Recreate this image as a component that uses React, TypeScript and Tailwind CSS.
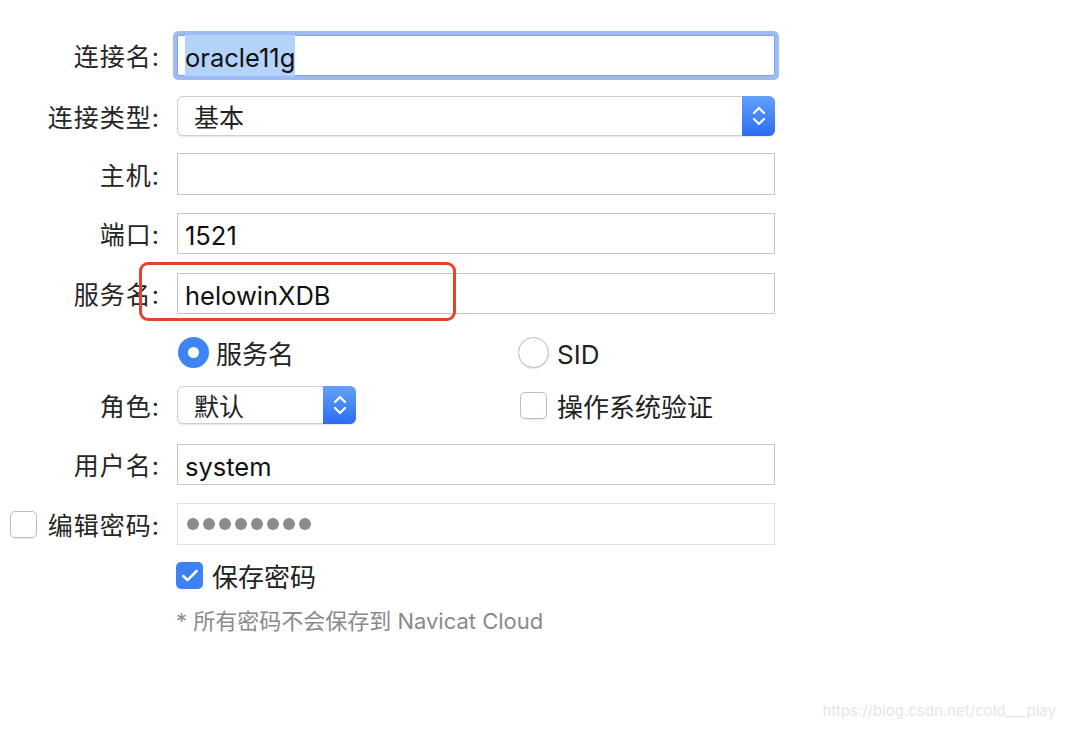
import { Check } from "lucide-react";

const font = { fontFamily: 'Inter, "Noto Sans CJK SC", sans-serif' };

// blue up/down arrows on the right of a popup button
const Stepper = () => (
  <div className="w-[33px] self-stretch -my-px -mr-px rounded-r-[6px] bg-gradient-to-b from-[#63a1fa] to-[#2a6cf1] flex items-center justify-center">
    <svg width="14" height="22" viewBox="0 0 14 22" fill="none" stroke="white" strokeWidth="2.2" strokeLinecap="round" strokeLinejoin="round">
      <path d="M2 8 L7 3 L12 8" />
      <path d="M2 14 L7 19 L12 14" />
    </svg>
  </div>
);

const Label = ({ children }: { children: React.ReactNode }) => (
  <div className="w-[160px] shrink-0 text-right text-[25px] tracking-[1px] text-[#262626] pt-[5px]">{children}</div>
);

const Field = ({ value, light }: { value?: string; light?: boolean }) => (
  <div
    className={`w-[598px] h-full border ${
      light ? "border-[#e2e2e2]" : "border-[#c6c6c6]"
    } bg-white flex items-center pl-[7px] pt-[5px] text-[25.5px] text-[#111]`}
  >
    {value}
  </div>
);

const Box = ({ checked }: { checked?: boolean }) =>
  checked ? (
    <div className="w-[27px] h-[27px] rounded-[5px] bg-[#3d82f4] flex items-center justify-center text-white">
      <Check size={20} strokeWidth={3} />
    </div>
  ) : (
    <div className="w-[27px] h-[27px] rounded-[5px] border border-[#bdbdbd] bg-white shadow-[0_1px_1px_rgba(0,0,0,0.08)]" />
  );

export default function App() {
  return (
    <div className="w-[1066px] h-[730px] bg-white relative overflow-hidden" style={font}>
      <div className="flex flex-col pt-[35px]">
        {/* 连接名 */}
        <div className="flex items-center h-[41px] gap-[17px]">
          <Label>连接名:</Label>
          <div className="w-[598px] h-full border border-[#7fa4ea] rounded-[2px] ring-[4px] ring-[#9dbcf4] bg-white flex items-center pl-[7px] text-[25.5px] text-[#111]">
            <span className="bg-[#b4d3fb] leading-[37px] pt-[4px]">oracle11g</span>
          </div>
        </div>

        {/* 连接类型 */}
        <div className="flex items-center h-[40px] gap-[17px] mt-[20px]">
          <Label>连接类型:</Label>
          <div className="w-[598px] h-full border border-[#cfcfcf] rounded-[6px] bg-white flex items-center shadow-[0_1px_1px_rgba(0,0,0,0.1)]">
            <span className="flex-1 pl-[16px] pt-[5px] text-[25px] text-[#222]">基本</span>
            <Stepper />
          </div>
        </div>

        {/* 主机 */}
        <div className="flex items-center h-[42px] gap-[17px] mt-[17px]">
          <Label>主机:</Label>
          <Field />
        </div>

        {/* 端口 */}
        <div className="flex items-center h-[41px] gap-[17px] mt-[18px]">
          <Label>端口:</Label>
          <Field value="1521" />
        </div>

        {/* 服务名 */}
        <div className="relative flex items-center h-[41px] gap-[17px] mt-[19px]">
          <Label>服务名:</Label>
          <Field value="helowinXDB" />
          <div className="absolute left-[139px] top-[-11px] w-[317px] h-[59px] border-[3px] border-[#e6432d] rounded-[9px]" />
        </div>

        {/* 服务名 / SID */}
        <div className="flex items-center h-[31px] mt-[23px] pl-[178px]">
          <div className="w-[340px] flex items-center gap-[7px]">
            <div className="w-[31px] h-[31px] rounded-full bg-[#3f84f5] flex items-center justify-center">
              <div className="w-[11px] h-[11px] rounded-full bg-white" />
            </div>
            <span className="text-[26px] text-[#222] pt-[4px]">服务名</span>
          </div>
          <div className="flex items-center gap-[8px]">
            <div className="w-[31px] h-[31px] rounded-full border border-[#bcbcbc] bg-white shadow-[0_1px_1px_rgba(0,0,0,0.1)]" />
            <span className="text-[26px] text-[#222] pt-[4px]">SID</span>
          </div>
        </div>

        {/* 角色 */}
        <div className="flex items-center h-[38px] gap-[17px] mt-[18px]">
          <Label>角色:</Label>
          <div className="w-[179px] h-full border border-[#cfcfcf] rounded-[6px] bg-white flex items-center shadow-[0_1px_1px_rgba(0,0,0,0.1)]">
            <span className="flex-1 pl-[16px] pt-[5px] text-[25px] text-[#222]">默认</span>
            <Stepper />
          </div>
          <div className="ml-[147px] flex items-center gap-[10px]">
            <Box />
            <span className="text-[26px] text-[#222] pt-[4px]">操作系统验证</span>
          </div>
        </div>

        {/* 用户名 */}
        <div className="flex items-center h-[41px] gap-[17px] mt-[20px]">
          <Label>用户名:</Label>
          <Field value="system" />
        </div>

        {/* 编辑密码 */}
        <div className="flex items-center h-[42px] gap-[17px] mt-[18px]">
          <div className="w-[160px] shrink-0 flex items-center">
            <div className="ml-[10px]">
              <Box />
            </div>
            <span className="ml-auto text-[25px] tracking-[1px] text-[#262626] pt-[5px]">编辑密码:</span>
          </div>
          <div className="w-[598px] h-full border border-[#e2e2e2] bg-white flex items-center pl-[9px] gap-[4px]">
            {[0, 1, 2, 3, 4, 5, 6, 7].map((i) => (
              <span key={i} className="w-[12px] h-[12px] rounded-full bg-[#8c8c8c]" />
            ))}
          </div>
        </div>

        {/* 保存密码 */}
        <div className="flex items-center h-[27px] mt-[17px] pl-[176px] gap-[9px]">
          <Box checked />
          <span className="text-[26px] text-[#222] pt-[4px]">保存密码</span>
        </div>

        {/* note */}
        <div className="mt-[19px] pl-[176px] text-[22px] leading-[26px] text-[#8a8a8a]">
          * 所有密码不会保存到 Navicat Cloud
        </div>
      </div>

      <div className="absolute right-[10px] bottom-[8px] text-[15px] text-[#e6e6e6]">
        https://blog.csdn.net/cold___play
      </div>
    </div>
  );
}
